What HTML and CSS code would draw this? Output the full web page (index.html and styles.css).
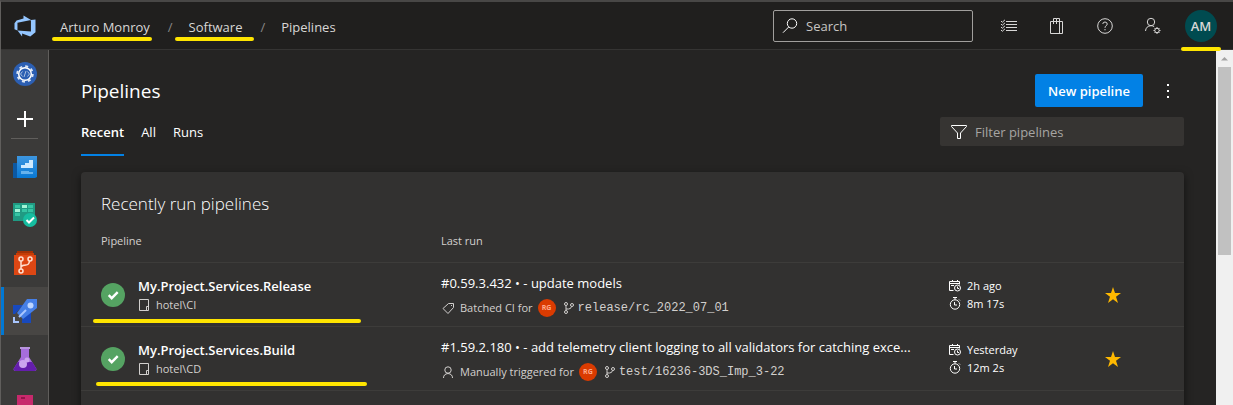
FILE: index.html
```html
<!DOCTYPE html>
<html lang="en">
<head>
<meta charset="utf-8">
<title>Pipelines</title>
<link rel="stylesheet" href="styles.css">
</head>
<body>
<svg class="defs" aria-hidden="true">
  <symbol id="ok" viewBox="0 0 24 24"><circle cx="12" cy="12" r="12" fill="#55a362"/><path d="M7.7 12.2l3 3 6-6" fill="none" stroke="#fff" stroke-width="2.4"/></symbol>
  <symbol id="folder" viewBox="0 0 12 14"><path d="M1.500 1.500h9v11h-9zM8.500 12.500v-4h2" fill="none" stroke="currentColor"/></symbol>
  <symbol id="branch" viewBox="0 0 12 14"><g fill="none" stroke="currentColor"><circle cx="3" cy="3" r="1.5"/><circle cx="3" cy="11" r="1.5"/><circle cx="9" cy="4" r="1.5"/><path d="M3 4.500v5M3 8h2.500q2.500 0 3-2.500"/></g></symbol>
  <symbol id="date" viewBox="0 0 12 13"><g fill="none" stroke="currentColor"><path d="M4.500 11.500h-4v-9h10v3M.5 4.500h10M3.500 1v2M8.500 1v2M2 6.500h3"/><circle cx="8.500" cy="9" r="3"/><path d="M8.500 7.500v2h1.500"/></g></symbol>
  <symbol id="timer" viewBox="0 0 12 13"><g fill="none" stroke="currentColor"><circle cx="6" cy="7.500" r="4.700"/><path d="M4 .5h4M6 .5v2M5.500 5v3h2.500M10 2.500l1 1"/></g></symbol>
  <symbol id="star" viewBox="0 0 16 16"><path d="M8 0l2 6h6l-5 3.800 2 6.200-5-3.800L3 16l2-6.200L0 6h6z" fill="#ffb900"/></symbol>
</svg>

<div class="app">
  <header class="topbar">
    <a class="logo" href="#" aria-label="Azure DevOps"><svg width="24" height="24" viewBox="0 0 16 16"><path fill="#94c6ff" d="M15 3.622v8.512L11.500 15l-5.425-1.975v1.958L3.004 10.971l8.951.7V4.006zM12.016 4.050L6.994 1v2.001L2.383 4.356 1 6.130v4.029l1.978.874V5.868z"/></svg></a>
    <nav class="crumbs" aria-label="Breadcrumb">
      <a class="marked mark-owner" href="#">Arturo Monroy</a><span class="slash">/</span>
      <a class="marked mark-project" href="#">Software</a><span class="slash">/</span>
      <a href="#">Pipelines</a>
    </nav>
    <label class="search">
      <svg width="16" height="16" viewBox="0 0 16 16" fill="none" stroke="#fff"><circle cx="10" cy="5.500" r="4.700"/><path d="M6.700 9L1 14.700"/></svg>
      <input type="text" placeholder="Search" aria-label="Search">
    </label>
    <div class="actions">
      <button aria-label="Work items"><svg width="18" height="16" viewBox="0 0 18 16" fill="none" stroke="currentColor"><path d="M6 3.500h11M6 6.500h11M6 9.500h11M6 12.500h11M1 3l1.300 1.300L5 1.800M1 6l1.300 1.300L5 4.800M1 9l1.300 1.300L5 7.800M1 12l1.300 1.300L5 10.800"/></svg></button>
      <button aria-label="Marketplace"><svg width="16" height="18" viewBox="0 0 16 18" fill="none" stroke="currentColor"><path d="M1.500 4.500h12v12h-12zM10.500 4.500v12M4.500 7V1.500h3V7M7.500 1.500h3V7"/></svg></button>
      <button aria-label="Help"><svg width="16" height="16" viewBox="0 0 16 16" fill="none" stroke="currentColor"><circle cx="8" cy="8" r="7.300"/><path d="M5.800 6q0-2 2.200-2t2.200 2q0 1-1.100 1.800T8 9.800M8 11v1.300"/></svg></button>
      <button aria-label="User settings"><svg width="18" height="18" viewBox="0 0 18 18" fill="none" stroke="currentColor"><circle cx="7" cy="5" r="3.700"/><path d="M1.500 14q.5-5 5.500-5.300 2 0 3.200 1"/><circle cx="13" cy="13.500" r="2.200"/><path d="M13 10v1.300M13 15.700V17M9.500 13.500h1.300M15.200 13.500h1.300M10.500 11l1 1M14.500 15l1 1M15.500 11l-1 1M11.500 15l-1 1"/></svg></button>
    </div>
    <button class="avatar marked mark-user" aria-label="Account">AM</button>
  </header>

  <div class="body">
    <nav class="rail" aria-label="Project">
      <a href="#" aria-label="Software"><svg width="24" height="24" viewBox="0 0 24 24"><circle cx="12" cy="12" r="12" fill="#2c5fb3"/><circle cx="12" cy="12" r="7.800" fill="none" stroke="#dce6f5" stroke-width="1.800" stroke-dasharray="3 3.120"/><circle cx="12" cy="12" r="6.300" fill="none" stroke="#fff" stroke-width="1.500"/><path d="M9.500 9.500L7.500 12l2 2.500M14.500 9.500l2 2.500-2 2.500M13 9l-2 6" fill="none" stroke="#a9bfdf"/></svg></a>
      <button class="add" aria-label="Add"><svg width="16" height="16" viewBox="0 0 16 16"><path d="M8 0v16M0 8h16" stroke="#fff" stroke-width="2"/></svg></button>
      <a href="#" aria-label="Overview"><svg width="24" height="24" viewBox="0 0 24 24"><defs><linearGradient id="g1" x2="0" y2="1"><stop stop-color="#3d96e0"/><stop offset="1" stop-color="#0878d4"/></linearGradient></defs><path d="M0 8h5v15H0z" fill="#0c58a2"/><path d="M4 1h20v21L22 23H4z" fill="url(#g1)"/><path d="M8 10h4V8h4V5h4v8H8z" fill="#cfeaff"/><path d="M8 16h8v1h4v2H8z" fill="#66b2ed"/></svg></a>
      <a href="#" aria-label="Boards"><svg width="24" height="24" viewBox="0 0 24 24"><path d="M0 0h22v18H0z" fill="#209a83"/><path d="M2 2h5v3H2zM15 2h5v3h-5zM9 6h5v3H9zM2 10h5v3H2zM15 6h5v3h-5z" fill="#36c5a4"/><path d="M9 2h5v3H9zM2 6h5v3H2z" fill="#a2f4d7"/><circle cx="17" cy="17" r="7" fill="#16bda0"/><path d="M13.500 17l2.500 2.500 5-5" fill="none" stroke="#fff" stroke-width="2"/></svg></a>
      <a href="#" aria-label="Repos"><svg width="24" height="24" viewBox="0 0 24 24"><path d="M4 0h16v3H4z" fill="#a33005"/><path d="M3 2h18v3H3z" fill="#c33c06"/><path d="M1 4h22v20H1z" fill="#dd4714"/><g fill="none" stroke="#ffe0d0" stroke-width="1.500"><circle cx="8" cy="8" r="2"/><circle cx="17" cy="8" r="2"/><circle cx="8" cy="20" r="2"/><path d="M8 10v8M8 16q1-2 5-2 3 0 3.500-4"/></g></svg></a>
      <a class="current" href="#" aria-label="Pipelines"><svg width="24" height="24" viewBox="0 0 24 24"><path d="M0 6h10L2 15H0zM9 24v-4l9-9v13z" fill="#1849bd"/><path d="M14 0h10v9L10 20l-6-6z" fill="#467fe6"/><circle cx="17.500" cy="6.500" r="3" fill="#bdd5ff"/><path d="M6 18l7-7" stroke="#a9c6ff" stroke-width="2"/><path d="M1 18v5h5" fill="none" stroke="#a9c6ff" stroke-width="2"/></svg></a>
      <a href="#" aria-label="Test Plans"><svg width="24" height="24" viewBox="0 0 24 24"><path d="M8 1h8v9l7.500 12q0 2-2 2h-19q-2 0-2-2L8 10z" fill="#a66ddd"/><path d="M4.700 15h14.600l4.200 7q0 2-2 2h-19q-2 0-2-2z" fill="#641eac"/><path d="M7 0h10v2H7z" fill="#b794dc"/><circle cx="10" cy="17" r="4" fill="#cba5ee"/><circle cx="14" cy="13" r="2.500" fill="#cba5ee"/></svg></a>
      <a href="#" aria-label="Artifacts"><svg width="24" height="24" viewBox="0 0 24 24"><path d="M4 0h16v24H4z" fill="#c7296c"/><path d="M8 2h4v2H8z" fill="#92154a"/></svg></a>
    </nav>

    <main class="page">
      <div class="titlebar">
        <h1>Pipelines</h1>
        <button class="primary">New pipeline</button>
        <button class="more" aria-label="More options"><svg width="4" height="16" viewBox="0 0 4 16" fill="#fff"><path d="M1 1h2v2H1zM1 7h2v2H1zM1 13h2v2H1z"/></svg></button>
      </div>
      <div class="toolbar">
        <nav class="tabs"><a class="selected" href="#">Recent</a><a href="#">All</a><a href="#">Runs</a></nav>
        <label class="filter">
          <svg width="16" height="14" viewBox="0 0 16 14" fill="none" stroke="#fff"><path d="M.5.5h15v1L9.500 8v5.500h-3V8l-6-6.500z"/></svg>
          <input type="text" placeholder="Filter pipelines" aria-label="Filter pipelines">
        </label>
      </div>

      <section class="card">
        <h2>Recently run pipelines</h2>
        <table>
          <colgroup><col class="c-name"><col><col class="c-time"><col class="c-star"></colgroup>
          <thead><tr><th>Pipeline</th><th>Last run</th><th></th><th></th></tr></thead>
          <tbody>
            <tr>
              <td class="marked mark-release"><div class="pipe"><svg width="24" height="24" role="img" aria-label="Succeeded"><use href="#ok"/></svg><div><a class="name" href="#">My.Project.Services.Release</a><div class="sub"><svg width="12" height="14"><use href="#folder"/></svg>hotel\CI</div></div></div></td>
              <td><a class="run" href="#">#0.59.3.432 • - update models</a><div class="meta"><svg class="kind" width="12" height="12" viewBox="0 0 12 12" fill="none" stroke="currentColor"><path d="M6.500 1.500h5v4l-5.500 6-5-5z"/><path d="M9 3.500h1"/></svg>Batched CI for<span class="who">RG</span><svg width="12" height="14"><use href="#branch"/></svg><code>release/rc_2022_07_01</code></div></td>
              <td><div class="time"><svg width="12" height="13"><use href="#date"/></svg>2h ago</div><div class="time"><svg width="12" height="13"><use href="#timer"/></svg>8m 17s</div></td>
              <td><button class="star" aria-label="Favorite"><svg width="16" height="16"><use href="#star"/></svg></button></td>
            </tr>
            <tr>
              <td class="marked mark-build"><div class="pipe"><svg width="24" height="24" role="img" aria-label="Succeeded"><use href="#ok"/></svg><div><a class="name" href="#">My.Project.Services.Build</a><div class="sub"><svg width="12" height="14"><use href="#folder"/></svg>hotel\CD</div></div></div></td>
              <td><a class="run" href="#">#1.59.2.180 • - add telemetry client logging to all validators for catching exce...</a><div class="meta"><svg class="kind" width="12" height="12" viewBox="0 0 12 12" fill="none" stroke="currentColor"><circle cx="6" cy="4" r="3.200"/><path d="M1.500 12q0-4 4.500-4.500 4.500.5 4.500 4.500"/></svg>Manually triggered for<span class="who">RG</span><svg width="12" height="14"><use href="#branch"/></svg><code>test/16236-3DS_Imp_3-22</code></div></td>
              <td><div class="time"><svg width="12" height="13"><use href="#date"/></svg>Yesterday</div><div class="time"><svg width="12" height="13"><use href="#timer"/></svg>12m 2s</div></td>
              <td><button class="star" aria-label="Favorite"><svg width="16" height="16"><use href="#star"/></svg></button></td>
            </tr>
            <tr><td colspan="4"></td></tr>
          </tbody>
        </table>
      </section>
    </main>
    <div class="scroll" aria-hidden="true"><svg width="17" height="17" viewBox="0 0 17 17"><path d="M5 10.500L8.500 7l3.500 3.500z" fill="#a3a3a3"/></svg><div class="thumb"></div></div>
  </div>
</div>
</body>
</html>
```
FILE: styles.css
```css
* { box-sizing: border-box; }
body { margin: 0; background: #252423; color: #fff; font: 13px/20px "Open Sans", "Noto Sans", sans-serif; }
a { color: inherit; text-decoration: none; }
button { border: 0; padding: 0; background: none; color: inherit; font: inherit; display: flex; align-items: center; justify-content: center; }
input { border: 0; padding: 0; background: none; color: inherit; font: inherit; outline: 0; min-width: 0; flex: 1; }
svg { flex: none; display: block; }
.defs { position: absolute; width: 0; height: 0; }
.app { height: 100vh; overflow: hidden; display: flex; flex-direction: column; border-top: 2px solid #484746; border-left: 1px solid #605e5c; }

/* Highlighter strokes */
.marked { position: relative; }
.marked::after { content: ""; position: absolute; height: 4px; border-radius: 2px; background: #ffe500; z-index: 1; }
.mark-owner::after { left: -8px; right: -2px; top: 20px; }
.mark-project::after { left: -14px; right: -12px; top: 20px; }
.mark-user::after { left: -4px; width: 40px; top: 37px; }
.mark-release::after { left: 12px; width: 268px; bottom: 3px; }
.mark-build::after { left: 15px; width: 271px; bottom: 4px; }

.topbar { flex: none; height: 48px; display: flex; align-items: center; background: #201f1e; border-bottom: 1px solid #353433; color: #d8d7d6; }
.logo { width: 48px; display: flex; justify-content: center; }
.crumbs { flex: 1; display: flex; align-items: center; padding: 2px 0 0 11px; }
.slash { color: #8a8886; margin: 0 16px 0 18px; }
.search { width: 200px; height: 32px; display: flex; align-items: center; gap: 8px; padding: 0 8px; border: 1px solid #a19f9d; border-radius: 2px; }
.search input::placeholder { color: #c8c6c4; opacity: 1; }
.actions { display: flex; margin: 0 8px 0 12px; }
.actions button { width: 48px; height: 32px; }
.avatar { width: 32px; height: 32px; margin-right: 16px; border-radius: 50%; background: #004b50; font-weight: 600; }

.body { flex: 1; min-height: 0; display: flex; }
.rail { flex: none; width: 48px; background: #3b3a39; border-right: 1px solid #605e5c; overflow: hidden; }
.rail > * { width: 100%; height: 48px; display: flex; align-items: center; justify-content: center; }
.rail .add { height: 41px; position: relative; margin-bottom: 4px; }
.rail .add::after { content: ""; position: absolute; left: 10px; right: 10px; bottom: 0; height: 1px; background: #605e5c; }
.rail .current { background: #484644; border-left: 3px solid #0078d4; padding-right: 3px; }

.page { flex: 1; min-width: 0; padding: 24px 32px 0; overflow: hidden; }
.titlebar { display: flex; align-items: center; height: 33px; }
h1 { flex: 1; margin: 0; font-size: 19px; line-height: 28px; font-weight: 400; }
.primary { height: 33px; padding: 0 13px; border-radius: 2px; background: #0281e5; font-weight: 600; }
.more { width: 32px; height: 32px; margin-left: 9px; }
.toolbar { display: flex; justify-content: space-between; align-items: center; height: 49px; }
.tabs { display: flex; gap: 17px; height: 49px; }
.tabs a { line-height: 51px; height: 49px; }
.tabs .selected { font-weight: 600; border-bottom: 2px solid #0281e5; }
.filter { width: 244px; height: 29px; display: flex; align-items: center; gap: 8px; padding: 0 11px; border-radius: 2px; background: #363432; }
.filter input::placeholder { color: #a7a5a3; opacity: 1; }

.card { margin-top: 16px; background: #323130; border-radius: 4px; box-shadow: 0 3px 8px #0008; }
h2 { margin: 0; padding: 20px 20px 0; font-size: 17px; line-height: 24px; font-weight: 300; }
table { width: 100%; table-layout: fixed; border-collapse: separate; border-spacing: 0; }
.c-name { width: 360px; }
.c-time { width: 144px; }
.c-star { width: 91px; }
th { height: 46px; padding: 3px 0 0; text-align: left; font-size: 11px; line-height: 16px; font-weight: 400; color: #d2d0ce; }
th:first-child, td:first-child { padding-left: 20px; }
td { height: 64px; padding: 0; border-top: 1px solid #3d3c3a; }
.pipe { display: flex; align-items: center; gap: 13px; }
.name { font-weight: 600; display: block; }
.sub, .meta, .time { display: flex; align-items: center; font-size: 11px; line-height: 18px; color: #d2d0ce; }
.sub { gap: 6px; }
.run { display: block; white-space: nowrap; }
.meta { margin-top: 6px; white-space: nowrap; }
.kind { margin: 0 6px 0 1px; }
.who { width: 18px; height: 18px; margin: 0 7px 0 5px; border-radius: 50%; background: #da3b01; color: #ffa98a; font-size: 7px; font-weight: 700; text-align: center; }
code { margin-left: 3px; font: 12px/18px "Liberation Mono", monospace; }
.time { gap: 6px; color: #fff; }
.star { width: 40px; height: 32px; }

.scroll { flex: none; width: 17px; background: #f0f0f0; display: flex; flex-direction: column; align-items: center; }
.thumb { width: 13px; height: 53%; background: #c1c1c1; }
```
